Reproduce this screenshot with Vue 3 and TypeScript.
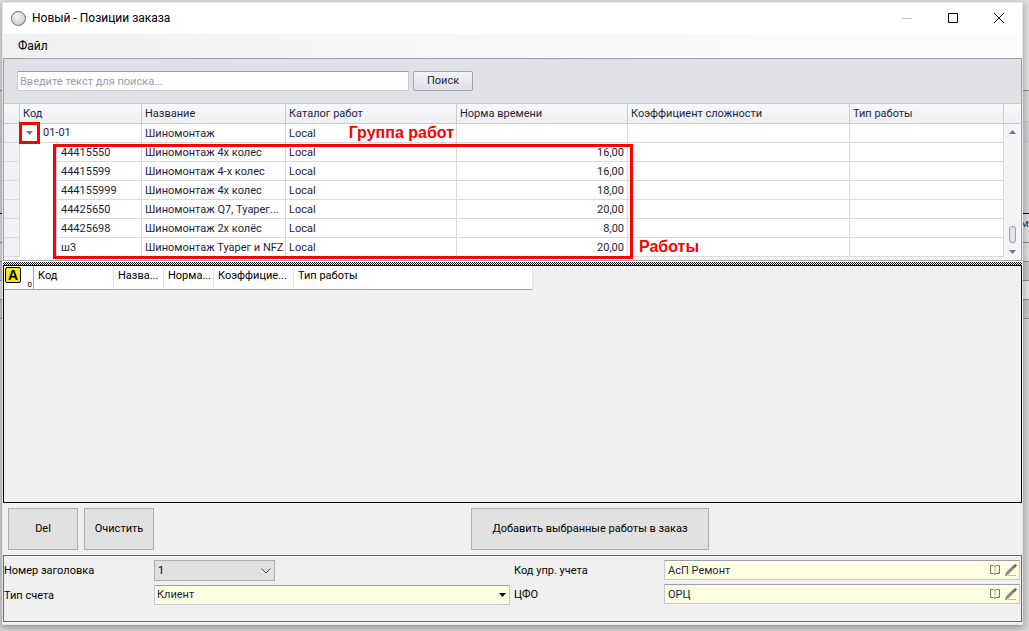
<script setup lang="ts">
import { ref } from 'vue'

interface Work {
  code: string
  name: string
  catalog: string
  time: string
}

const columns = ['Код', 'Название', 'Каталог работ', 'Норма времени', 'Коэффициент сложности', 'Тип работы']
const pickedColumns = ['Код', 'Назва...', 'Норма...', 'Коэффицие...', 'Тип работы']

const works: Work[] = [
  { code: '44415550', name: 'Шиномонтаж 4х колес', catalog: 'Local', time: '16,00' },
  { code: '44415599', name: 'Шиномонтаж 4-х колес', catalog: 'Local', time: '16,00' },
  { code: '444155999', name: 'Шиномонтаж 4х колес', catalog: 'Local', time: '18,00' },
  { code: '44425650', name: 'Шиномонтаж Q7, Туарег...', catalog: 'Local', time: '20,00' },
  { code: '44425698', name: 'Шиномонтаж 2х колёс', catalog: 'Local', time: '8,00' },
  { code: 'ш3', name: 'Шиномонтаж Туарег и NFZ', catalog: 'Local', time: '20,00' },
]

const search = ref('')
const headerNumber = ref('1')
const accountType = ref('Клиент')
const lookups = ref([
  { id: 'code', label: 'Код упр. учета', value: 'АсП Ремонт' },
  { id: 'cfo', label: 'ЦФО', value: 'ОРЦ' },
])
</script>

<template>
  <div class="desktop">
    <span class="behind" aria-hidden="true">ми</span>
    <main class="window">
      <header class="titlebar">
        <span class="orb"></span>
        <h1>Новый - Позиции заказа</h1>
        <div class="caption">
          <button type="button" class="dim" aria-label="Свернуть">
            <svg width="12" height="12" viewBox="0 0 12 12"><path d="M1 6.5H11" /></svg>
          </button>
          <button type="button" aria-label="Развернуть">
            <svg width="12" height="12" viewBox="0 0 12 12"><path d="M1.5 1.5H10.5V10.5H1.5Z" /></svg>
          </button>
          <button type="button" aria-label="Закрыть">
            <svg width="12" height="12" viewBox="0 0 12 12"><path d="M1 1L11 11M11 1L1 11" /></svg>
          </button>
        </div>
      </header>

      <nav class="menu"><button type="button">Файл</button></nav>

      <section class="catalog">
        <form class="search" @submit.prevent>
          <input v-model="search" type="text" placeholder="Введите текст для поиска..." aria-label="Поиск" />
          <button type="submit">Поиск</button>
        </form>
        <div class="tree">
          <table>
            <colgroup>
              <col class="c-mark" />
              <col class="c-code" />
              <col class="c-name" />
              <col class="c-cat" />
              <col class="c-time" />
              <col class="c-coef" />
              <col />
            </colgroup>
            <thead>
              <tr>
                <th></th>
                <th v-for="c in columns" :key="c">{{ c }}</th>
              </tr>
            </thead>
            <tbody>
              <tr>
                <td class="mark"></td>
                <td class="group">
                  <div>
                    <button type="button" class="toggle" aria-label="Свернуть группу">
                      <svg width="7" height="4" viewBox="0 0 7 4"><path d="M0 0H7L3.5 4Z" /></svg>
                    </button>
                    01-01
                  </div>
                </td>
                <td>Шиномонтаж</td>
                <td class="noted">Local<strong class="note group-note">Группа работ</strong></td>
                <td></td>
                <td></td>
                <td></td>
              </tr>
              <tr v-for="w in works" :key="w.code">
                <td class="mark"></td>
                <td class="child"><div>{{ w.code }}</div></td>
                <td>{{ w.name }}</td>
                <td>{{ w.catalog }}</td>
                <td class="num">{{ w.time }}</td>
                <td></td>
                <td></td>
              </tr>
            </tbody>
          </table>
          <div class="scroll">
            <span class="scroll-head"></span>
            <svg width="7" height="4" viewBox="0 0 7 4"><path d="M0 4H7L3.5 0Z" /></svg>
            <span class="thumb"></span>
            <svg width="7" height="4" viewBox="0 0 7 4"><path d="M0 0H7L3.5 4Z" /></svg>
          </div>
          <div class="frame"></div>
          <strong class="note works-note">Работы</strong>
        </div>
      </section>

      <div class="splitter"></div>

      <section class="picked">
        <table>
          <colgroup>
            <col class="p-count" />
            <col class="p-code" />
            <col class="p-short" />
            <col class="p-short" />
            <col class="p-coef" />
            <col class="p-type" />
          </colgroup>
          <thead>
            <tr>
              <th class="count"><div><b>A</b><small>0</small></div></th>
              <th v-for="c in pickedColumns" :key="c">{{ c }}</th>
            </tr>
          </thead>
        </table>
      </section>

      <div class="actions">
        <button type="button">Del</button>
        <button type="button">Очистить</button>
        <button type="button" class="add">Добавить выбранные работы в заказ</button>
      </div>

      <form class="details" @submit.prevent>
        <div class="fields main">
          <label for="header-number">Номер заголовка</label>
          <div class="pick grey">
            <select id="header-number" v-model="headerNumber"><option>1</option></select>
            <svg width="10" height="6" viewBox="0 0 10 6"><path class="chevron" d="M.5 .5L5 5L9.5 .5" /></svg>
          </div>
          <label for="account-type">Тип счета</label>
          <div class="pick">
            <select id="account-type" v-model="accountType"><option>Клиент</option></select>
            <svg width="7" height="4" viewBox="0 0 7 4"><path d="M0 0H7L3.5 4Z" /></svg>
          </div>
        </div>
        <div class="fields">
          <template v-for="l in lookups" :key="l.id">
            <label :for="l.id">{{ l.label }}</label>
            <div class="lookup">
              <input :id="l.id" v-model="l.value" type="text" />
              <button type="button" aria-label="Выбрать">
                <svg width="12" height="12" viewBox="0 0 12 12">
                  <path class="cover" d="M1.500 1V9.500H4.500L6 10.500L7.500 9.500H10.500V1" />
                  <path d="M1 1.500H4.500L6 2.500L7.500 1.500H11" />
                  <path class="thin" d="M6 2V10" />
                </svg>
              </button>
              <button type="button" aria-label="Изменить">
                <svg width="12" height="12" viewBox="0 0 12 12">
                  <path class="thin" d="M3 11.5H11" />
                  <path class="body" d="M2 9.500L9 2.500" />
                  <path class="fill" d="M8 2L10 0L12 1.500L10 4ZM0 12L1 9L3 11Z" />
                </svg>
              </button>
            </div>
          </template>
        </div>
      </form>
    </main>
  </div>
</template>

<style>
body {
  margin: 0;
}
</style>

<style scoped>
* {
  box-sizing: border-box;
}
.desktop {
  position: relative;
  overflow: hidden;
  min-height: 100vh;
  padding: 3px 7px 7px 3px;
  display: flex;
  font: 11px/14px Roboto, "DejaVu Sans", sans-serif;
  color: #000;
  background: linear-gradient(
    #dedede 90px, #888 90px 91px, #d6d6d6 91px 121px,
    #c2c4ca 121px 122px, #d0d1d6 122px 141px, #c2c4ca 141px 142px,
    #d2d2d2 142px 213px, #000 213px 214px, #dedede 214px 242px,
    #888 242px 243px, #dedede 243px 261px, #888 261px 262px,
    #c4c4c4 262px 280px, #888 280px 281px, #e4e4e4 281px 299px,
    #888 299px 300px, #c4c4c4 300px 318px, #888 318px 319px, #d4d4d4 319px
  );
}
.behind {
  position: absolute;
  top: 217px;
  right: -6px;
  color: #123a78;
}
.window {
  position: relative;
  flex: 1;
  min-width: 0;
  display: flex;
  flex-direction: column;
  background: #f0f0f0;
  box-shadow: 0 0 0 1px #e6e6e6, 0 2px 7px 1px rgba(0, 0, 0, 0.35);
}
button,
input,
select {
  font: inherit;
  color: inherit;
  margin: 0;
}
.titlebar {
  height: 31px;
  display: flex;
  align-items: center;
  background: #fff;
  padding: 0 0 1px 8px;
}
.orb {
  width: 15px;
  height: 15px;
  border: 1px solid #666;
  border-radius: 50%;
  background: radial-gradient(circle at 40% 35%, #f4f4f4, #c2c2c2);
}
h1 {
  margin: 0 0 0 6px;
  font: 12px/16px Roboto, sans-serif;
}
.caption {
  margin-left: auto;
  display: flex;
}
.caption button {
  width: 46px;
  height: 30px;
  border: 0;
  padding: 0;
  background: none;
}
.caption svg {
  display: block;
  margin: 0 auto;
}
.caption path {
  fill: none;
  stroke: #000;
}
.caption .dim path {
  stroke: #c4c4c4;
}
.menu {
  height: 24px;
  background: linear-gradient(90deg, #f0f0f0, #fcfcfc 80%);
}
.menu button {
  height: 24px;
  padding: 0 15px;
  border: 0;
  background: none;
  font: 12px/16px Roboto, sans-serif;
}
.catalog {
  border: 1px solid #9d9dab;
  color: #1e1e38;
}
.search {
  display: flex;
  gap: 4px;
  padding: 12px 13px;
  background: #e0e1e6;
}
.search input {
  width: 392px;
  height: 20px;
  padding: 0 2px;
  border: 1px solid #c8c9d2;
  border-top-color: #9d9dab;
  background: #fff;
}
.search input::placeholder {
  color: #9c9cac;
  opacity: 1;
}
.search button {
  width: 60px;
  height: 20px;
  padding: 0;
  border: 1px solid #a3a4b1;
  border-radius: 2px;
  background: linear-gradient(#f3f4f7, #dfe0e5);
}
.tree {
  display: flex;
  position: relative;
  padding-bottom: 3px;
  background: #fff;
}
table {
  table-layout: fixed;
  border-collapse: separate;
  border-spacing: 0;
}
.tree table {
  flex: 1;
  width: 0;
}
.c-mark { width: 16px; }
.c-code { width: 122px; }
.c-name { width: 144px; }
.c-cat { width: 171px; }
.c-time { width: 171px; }
.c-coef { width: 222px; }
th,
td {
  height: 19px;
  padding: 0 3px;
  border: 0 solid #d8d8df;
  border-width: 0 1px 1px 0;
  white-space: nowrap;
  text-align: left;
  font-weight: normal;
}
.tree td {
  padding-top: 1px;
}
.tree th {
  height: 21px;
  border-color: #c9cad3;
  border-top-width: 1px;
  background: linear-gradient(#f7f8fa, #eef0f3);
}
.tree td.mark {
  background: #f1f2f5;
}
.tree td.group,
.tree td.child {
  padding: 0;
}
.group div {
  display: flex;
  align-items: center;
  gap: 3px;
  height: 18px;
}
.toggle {
  display: flex;
  align-items: center;
  justify-content: center;
  width: 21px;
  height: 22px;
  margin: 0 0 0 -1px;
  padding: 0;
  border: 3px solid #f00;
  background: none;
}
.toggle svg,
.scroll svg {
  fill: #777785;
}
.tree td.child {
  border-bottom-color: transparent;
}
.child div {
  height: 19px;
  margin: 0 0 -1px 36px;
  padding: 3px 0 0 4px;
  border-left: 1px solid #d8d8df;
  border-bottom: 1px solid #d8d8df;
}
.tree td.num {
  text-align: right;
}
.tree td.noted {
  position: relative;
}
.note {
  font: bold 16px/18px "Liberation Sans", Arial, sans-serif;
  color: #f00;
}
.group-note {
  position: absolute;
  right: 2px;
  top: 0;
}
.works-note {
  position: absolute;
  left: 635px;
  bottom: 4px;
}
.frame {
  position: absolute;
  left: 49px;
  top: 41px;
  bottom: 1px;
  width: 580px;
  border: 3px solid #f00;
}
.scroll {
  width: 17px;
  display: flex;
  flex-direction: column;
  align-items: center;
  background: #f4f4f7;
}
.scroll-head {
  width: 100%;
  height: 21px;
  margin-bottom: 6px;
  border: solid #c9cad3;
  border-width: 1px 0;
  background: linear-gradient(#f7f8fa, #eef0f3);
}
.thumb {
  width: 7px;
  height: 17px;
  margin-top: auto;
  margin-bottom: 7px;
  border: 1px solid #9d9dab;
  border-radius: 3px;
  background: #e4e5ea;
}
.scroll svg:last-child {
  margin-bottom: 3px;
}
.splitter {
  height: 4px;
  border: solid #fff;
  border-width: 1px 0 0;
  background: conic-gradient(#000 25%, #fff 0 50%, #000 0 75%, #fff 0) 0 0 / 2px 2px;
}
.picked {
  flex: 1;
  border: 1px solid #000;
}
.picked table {
  width: 529px;
}
.p-count { width: 30px; }
.p-code { width: 80px; }
.p-short { width: 50px; }
.p-coef { width: 80px; }
.picked th {
  height: 24px;
  padding: 0 0 4px 4px;
  border-right-color: #e3e3e3;
  border-bottom-color: #a0a0a0;
  background: #fff;
}
.picked th.count {
  padding: 0 1px;
  border-right-color: #a0a0a0;
}
.count div {
  display: flex;
  justify-content: space-between;
  height: 22px;
}
.count b {
  width: 16px;
  height: 16px;
  border: 1px solid #000;
  border-radius: 2px;
  background: #f5e614;
  font: bold 14px/14px "Liberation Sans", Arial, sans-serif;
  text-align: center;
}
.count small {
  align-self: flex-end;
  font-size: 8px;
  line-height: 8px;
}
.actions {
  display: flex;
  gap: 6px;
  padding: 5px;
}
.actions button {
  width: 70px;
  height: 42px;
  padding: 0 0 1px;
  border: 1px solid #adadad;
  background: #e1e1e1;
}
.actions .add {
  width: 238px;
  margin-left: 311px;
}
.details {
  display: flex;
  gap: 3px;
  height: 67px;
  margin-bottom: 2px;
  padding: 4px 1px 0 0;
  border: 1px solid #696969;
}
.fields {
  flex: 1;
  display: grid;
  grid-template-columns: 150px 1fr;
  grid-auto-rows: 20px;
  align-content: start;
  row-gap: 4px;
}
.fields.main {
  grid-auto-rows: 21px;
  padding-right: 1px;
}
.fields label {
  padding-top: 4px;
  white-space: nowrap;
}
.pick {
  position: relative;
  height: 20px;
}
.pick.grey {
  width: 121px;
}
select {
  appearance: none;
  display: block;
  width: 100%;
  height: 20px;
  padding: 0 2px;
  border: 1px solid #c8c9d2;
  border-top-color: #9d9dab;
  border-radius: 0;
  background: #ffffe1;
  color: #1e1e38;
}
.grey select {
  height: 21px;
  padding: 0 3px;
  border-color: #adadad;
  background: #e1e1e1;
  color: #000;
}
.pick svg {
  position: absolute;
  right: 4px;
  top: 8px;
  pointer-events: none;
}
.chevron {
  fill: none;
  stroke: #444;
}
.lookup {
  display: flex;
  align-items: center;
  height: 20px;
  padding-right: 2px;
  gap: 4px;
  border: 1px solid #c8c9d2;
  border-top-color: #9d9dab;
  background: #ffffe1;
}
.lookup input {
  flex: 1;
  min-width: 0;
  height: 18px;
  padding: 0 3px;
  border: 0;
  background: none;
  color: #1e1e38;
}
.lookup button {
  display: flex;
  padding: 0;
  border: 0;
  background: none;
}
.lookup path {
  fill: none;
  stroke: #888;
}
.lookup .cover {
  stroke: #707070;
}
.lookup .thin {
  stroke: #bbb;
}
.lookup .body {
  stroke: #858585;
  stroke-width: 3;
}
.lookup .fill {
  fill: #666;
  stroke: none;
}
</style>
